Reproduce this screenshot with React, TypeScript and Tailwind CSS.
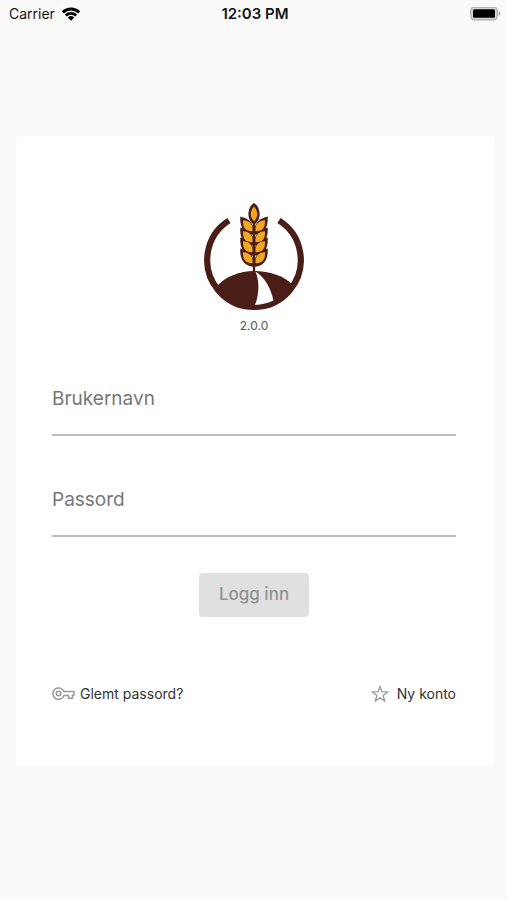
import React, { useState } from "react";

const BROWN = "#4a1d16";
const GRAIN = "#f0a822";

const grainRows = [0, 11, 21, 32];

const StatusBar = () => (
    <header className="grid h-7 grid-cols-3 items-center pr-1.5 pl-[9px] text-sm text-[#161616]">
        <div className="flex items-center gap-1.5">
            <span>Carrier</span>
            <svg width="20" height="15" viewBox="0 0 20 15" aria-label="Wi-Fi" role="img">
                <path d="M0.800 4.300a13.300 13.300 0 0 1 18.400 0l-2 2.100a10.500 10.500 0 0 0-14.400 0z" fill="#000" />
                <path d="M3.800 7.500a9 9 0 0 1 12.400 0l-2 2a6.200 6.200 0 0 0-8.400 0z" fill="#000" />
                <path d="M6.800 10.500a4.700 4.700 0 0 1 6.400 0L10 13.700z" fill="#000" />
            </svg>
        </div>
        <time className="text-center text-[15px] font-semibold whitespace-nowrap">12:03 PM</time>
        <svg
            className="justify-self-end"
            width="31"
            height="14"
            viewBox="0 0 31 14"
            aria-label="Battery full"
            role="img"
        >
            <rect x="0.800" y="0.300" width="26.400" height="12.400" rx="3.600" fill="#d8d8d8" stroke="#b4b4b4" strokeWidth="1.400" />
            <path d="M28.500 4c1.300.5 2 1.300 2 2.500s-.7 2-2 2.500z" fill="#b4b4b4" />
            <rect x="3" y="2.200" width="22" height="8.600" rx="1.500" fill="#000" />
        </svg>
    </header>
);

const GrainColumn = () => (
    <>
        {grainRows.map((y) => (
            <path
                key={y}
                d="M36.300 13.500C45 15.500 50 20 50.500 31.800C40.500 31.500 35.500 25 36.300 13.500Z"
                transform={`translate(0 ${y})`}
                fill={BROWN}
            />
        ))}
        {grainRows.map((y) => (
            <path
                key={y}
                d="M39 17.200C45.500 17.600 49.300 21 48.500 28.200C41.500 28.500 38.600 24.500 39 17.200Z"
                transform={`translate(0 ${y})`}
                fill={GRAIN}
            />
        ))}
    </>
);

const Logo = () => (
    <svg width="100" height="108" viewBox="0 0 100 108" aria-label="Logo" role="img">
        {/* open ring */}
        <path d="M25 17.500A46.800 46.800 0 1 0 75 17.500" fill="none" stroke={BROWN} strokeWidth="6.200" />

        {/* hills with the road between them */}
        <path d="M12 84C22 73 36 68 50 68C66 68 80 73 89 82C82 97 68 105 50 105C32 105 18 96 12 84Z" fill={BROWN} />
        <path d="M51.500 68.500C55.500 78 55.500 91 51 102C58 101.500 64 100 69.500 97.500C66.500 84.500 61 74.500 51.500 68.500Z" fill="#fff" />

        {/* ear of wheat */}
        <path d="M50 18V70" stroke={BROWN} strokeWidth="2.400" />
        <GrainColumn />
        <g transform="matrix(-1 0 0 1 100 0)">
            <GrainColumn />
        </g>
        <path d="M50 0C53 1.500 55.600 6 55.600 11C55.600 15.500 53.500 19.500 50 21.500C46.500 19.500 44.400 15.500 44.400 11C44.400 6 47 1.500 50 0Z" fill={BROWN} />
        <path d="M50 3.500C52 5.500 53.200 8.500 53.200 11.300C53.200 14 52 16.500 50 18.200C48 16.500 46.800 14 46.800 11.300C46.800 8.500 48 5.500 50 3.500Z" fill={GRAIN} />
    </svg>
);

const KeyIcon = () => (
    <svg width="24" height="16" viewBox="0 0 24 16" fill="none" stroke="#999" strokeWidth="1.500" strokeLinejoin="round" aria-hidden="true">
        <path d="M11.900 5.500H22V9H20.500V12.300H16.500V9.500H12A5.700 5.700 0 1 1 11.900 5.500Z" />
        <circle cx="6.600" cy="7.500" r="2.300" />
    </svg>
);

const StarIcon = () => (
    <svg width="18" height="18" viewBox="0 0 18 18" fill="none" stroke="#999" strokeWidth="1.300" aria-hidden="true">
        <path d="M9 1.500L10.900 6.700L16.700 6.900L12.100 10.400L13.700 16L9 12.700L4.300 16L5.900 10.400L1.300 6.900L7.100 6.700Z" />
    </svg>
);

type FieldProps = {
    id: string;
    label: string;
    type: string;
    value: string;
    onChange: (value: string) => void;
};

const Field = ({ id, label, type, value, onChange }: FieldProps) => (
    <div className="flex flex-col border-b-2 border-[#bdbdbd]">
        <label htmlFor={id} className="text-[19px] leading-7 text-[#777]">
            {label}
        </label>
        <input
            id={id}
            type={type}
            value={value}
            onChange={(e) => onChange(e.target.value)}
            className="h-[21px] w-full bg-transparent text-base leading-5 text-[#333] focus:outline-none"
        />
    </div>
);

export default function App() {
    const [username, setUsername] = useState("");
    const [password, setPassword] = useState("");

    return (
        <div className="min-h-screen bg-[#fafafa] font-['Inter','Liberation_Sans',sans-serif]">
            <StatusBar />

            <main className="pt-[108px] pr-[13px] pb-8 pl-4">
                <form
                    onSubmit={(e) => e.preventDefault()}
                    className="flex flex-col rounded-sm bg-white pt-[67px] pr-[38px] pb-[62px] pl-9"
                >
                    <div className="flex flex-col items-center gap-[5px]">
                        <Logo />
                        <span className="text-xs leading-5 text-[#555]">2.0.0</span>
                    </div>

                    <div className="mt-[49px] flex flex-col gap-[50px]">
                        <Field id="username" label="Brukernavn" type="text" value={username} onChange={setUsername} />
                        <Field id="password" label="Passord" type="password" value={password} onChange={setPassword} />
                    </div>

                    <button
                        type="submit"
                        disabled={!username || !password}
                        className="mt-9 h-11 self-center rounded bg-[#e0e0e0] px-5 text-[17px] font-medium text-[#929292]"
                    >
                        Logg inn
                    </button>

                    <div className="mt-[67px] flex items-center justify-between text-sm leading-5 text-[#333]">
                        <a href="#glemt-passord" className="flex items-center gap-1">
                            <KeyIcon />
                            Glemt passord?
                        </a>
                        <a href="#ny-konto" className="flex items-center gap-2">
                            <StarIcon />
                            Ny konto
                        </a>
                    </div>
                </form>
            </main>
        </div>
    );
}
